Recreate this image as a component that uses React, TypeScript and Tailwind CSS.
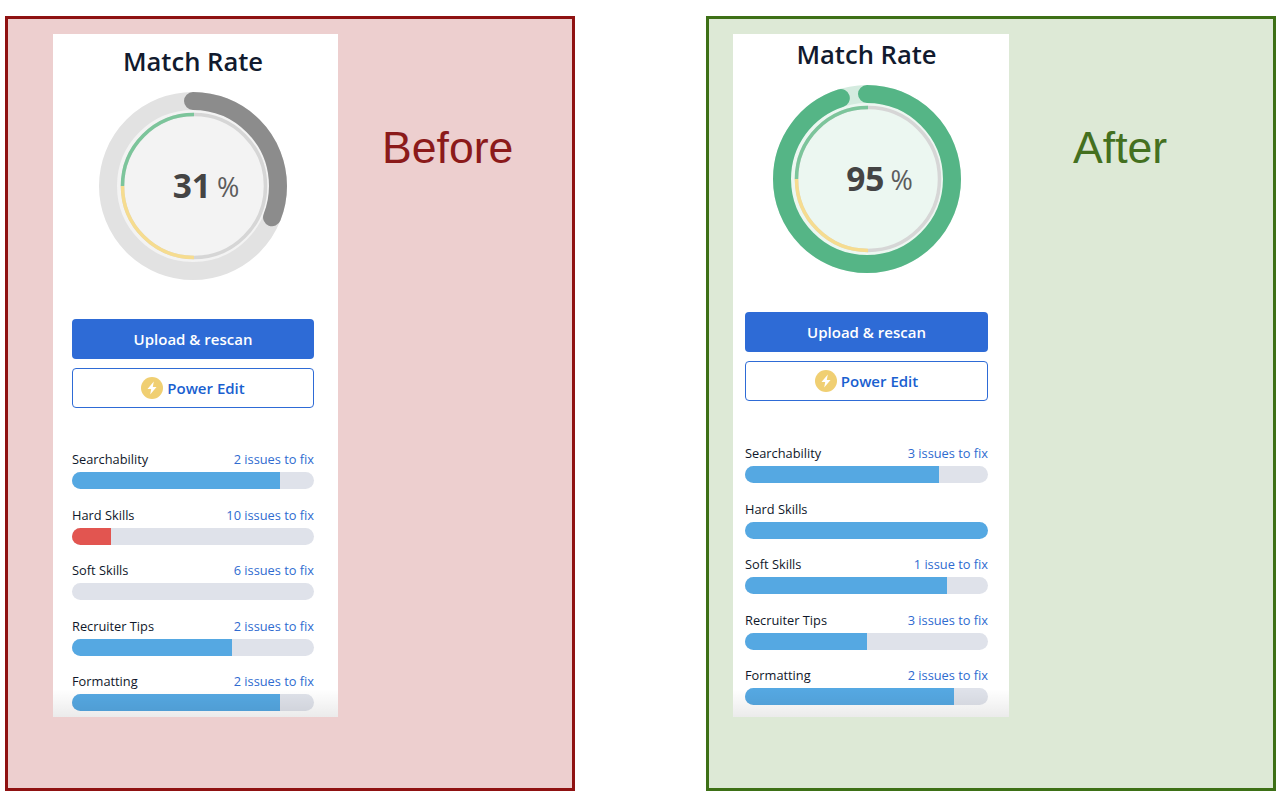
type Row = { name: string; issues?: string; pct: number; red?: boolean };

const beforeRows: Row[] = [
  { name: "Searchability", issues: "2 issues to fix", pct: 86 },
  { name: "Hard Skills", issues: "10 issues to fix", pct: 16, red: true },
  { name: "Soft Skills", issues: "6 issues to fix", pct: 0 },
  { name: "Recruiter Tips", issues: "2 issues to fix", pct: 66 },
  { name: "Formatting", issues: "2 issues to fix", pct: 86 },
];

const afterRows: Row[] = [
  { name: "Searchability", issues: "3 issues to fix", pct: 80 },
  { name: "Hard Skills", pct: 100 },
  { name: "Soft Skills", issues: "1 issue to fix", pct: 83 },
  { name: "Recruiter Tips", issues: "3 issues to fix", pct: 50 },
  { name: "Formatting", issues: "2 issues to fix", pct: 86 },
];

const Ring = ({ score, track, bar, fill }: { score: number; track: string; bar: string; fill: string }) => {
  return (
    <div className="relative mx-auto mt-[14px] h-[188px] w-[188px]">
      <svg width="188" height="188" viewBox="0 0 188 188">
        <circle cx="94" cy="94" r="78" fill={fill} />
        <circle cx="94" cy="94" r="85" fill="none" stroke={track} strokeWidth="18" />
        <circle
          cx="94"
          cy="94"
          r="85"
          fill="none"
          stroke={bar}
          strokeWidth="18"
          strokeLinecap="round"
          pathLength={100}
          strokeDasharray={`${score} 100`}
          transform="rotate(-90 94 94)"
        />
        <circle cx="95" cy="94" r="71.5" fill="none" stroke="#d6d6d6" strokeWidth="3.5" />
        <path d="M95 22.5A71.5 71.5 0 0 0 23.5 94" fill="none" stroke="#7cc59b" strokeWidth="3.5" />
        <path d="M23.5 94A71.5 71.5 0 0 0 95 165.5" fill="none" stroke="#f6dc8f" strokeWidth="3.5" />
      </svg>
      <div className="absolute inset-0 flex items-center justify-center pl-[26px]">
        <span className="text-[33.5px] leading-none font-bold text-[#444444]">{score}</span>
        <span className="ml-[6px] text-[27px] leading-none text-[#5c5c5c]">%</span>
      </div>
    </div>
  );
};

const Bars = ({ rows, offset }: { rows: Row[]; offset: string }) => {
  return (
    <div className={`flex flex-col gap-[16.5px] ${offset}`}>
      {rows.map((row) => (
        <div key={row.name}>
          <div className="flex h-5 items-center justify-between text-[12.8px]">
            <span className="text-[#0f172a]">{row.name}</span>
            {row.issues && <span className="text-[#2f6bd0]">{row.issues}</span>}
          </div>
          <div className="mt-[2px] h-[17px] overflow-hidden rounded-full bg-[#dfe2ea]">
            <div
              className={row.red ? "h-full bg-[#e25550]" : "h-full bg-[#55a8e2]"}
              style={{ width: `${row.pct}%` }}
            />
          </div>
        </div>
      ))}
    </div>
  );
};

const Card = ({
  className,
  offset,
  score,
  track,
  bar,
  fill,
  rows,
}: {
  className: string;
  offset: string;
  score: number;
  track: string;
  bar: string;
  fill: string;
  rows: Row[];
}) => {
  return (
    <div className={`relative mt-[15px] h-[683px] overflow-hidden bg-white ${className}`}>
      <p className="text-center text-[25.6px] leading-8 font-semibold text-[#111a2e]">Match Rate</p>
      <Ring score={score} track={track} bar={bar} fill={fill} />
      <button className="mt-[39px] h-10 w-full rounded bg-[#2e6bd6] text-[15px] font-semibold text-white">
        Upload &amp; rescan
      </button>
      <button className="mt-[9px] flex h-10 w-full items-center justify-center gap-[3px] rounded border border-[#2e6bd6] bg-white text-[15px] font-[550] text-[#1a5fd0]">
        <svg width="22" height="22" viewBox="0 0 22 22">
          <circle cx="11" cy="11" r="11" fill="#f0cf72" />
          <path d="M12.8 4.5 6.5 12h3.7l-1 5.5L15.5 10h-3.7z" fill="#ffffff" />
        </svg>
        <span className="ml-[1px]">Power Edit</span>
      </button>
      <Bars rows={rows} offset={offset} />
      <div className="absolute inset-x-0 bottom-0 h-[28px] bg-linear-to-b from-transparent to-[#00000014]" />
    </div>
  );
};

const App = () => {
  return (
    <div className="flex h-[800px] w-[1280px] bg-white pt-4 pl-[5px] font-['Open_Sans',sans-serif]">
      <div className="flex h-[775px] w-[570px] border-[3px] border-[#8f1212] bg-[#edcfcf]">
        <Card
          className="ml-[45px] w-[285px] pt-3 pr-6 pl-[19px]"
          offset="mt-[42px]"
          score={31}
          track="#e2e2e2"
          bar="#8c8c8c"
          fill="#f3f3f3"
          rows={beforeRows}
        />
        <p className="mt-[105px] ml-[44px] font-['Liberation_Sans',sans-serif] text-[44.6px] leading-[48px] text-[#8b1a1a]">
          Before
        </p>
      </div>
      <div className="ml-[131px] flex h-[775px] w-[570px] border-[3px] border-[#3d7016] bg-[#dde9d6]">
        <Card
          className="ml-[24px] w-[276px] pt-[5px] pr-[21px] pl-3"
          offset="mt-[43px]"
          score={95}
          track="#d4ebdf"
          bar="#55b586"
          fill="#ecf7f1"
          rows={afterRows}
        />
        <p className="mt-[105px] ml-[64px] font-['Liberation_Sans',sans-serif] text-[44.6px] leading-[48px] text-[#44701f]">
          After
        </p>
      </div>
    </div>
  );
};

export default App;
